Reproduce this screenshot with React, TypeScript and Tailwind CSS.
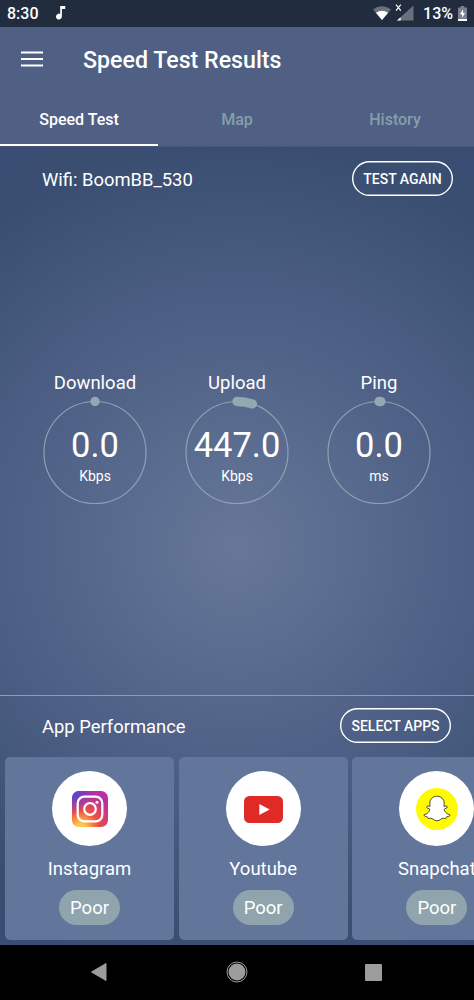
import { FaSnapchatGhost } from "react-icons/fa";

const tabs = ["Speed Test", "Map", "History"];

const gauges = [
    { label: "Download", value: "0.0", unit: "Kbps", sweep: 0 },
    { label: "Upload", value: "447.0", unit: "Kbps", sweep: 17.5 },
    { label: "Ping", value: "0.0", unit: "ms", sweep: 2 },
];

const InstagramIcon = () => (
    <svg width="36" height="36" viewBox="0 0 36 36">
        <defs>
            <radialGradient id="igWarm" gradientUnits="userSpaceOnUse" cx="9" cy="37" r="35">
                <stop offset="0" stopColor="#ffd45c" />
                <stop offset="0.15" stopColor="#fdbf4c" />
                <stop offset="0.5" stopColor="#f0503f" />
                <stop offset="1" stopColor="#b92fa5" />
            </radialGradient>
            <radialGradient id="igCool" gradientUnits="userSpaceOnUse" cx="0" cy="0" r="24">
                <stop offset="0" stopColor="#3b58d6" />
                <stop offset="0.3" stopColor="#5546cc" stopOpacity="0.85" />
                <stop offset="1" stopColor="#7638c8" stopOpacity="0" />
            </radialGradient>
        </defs>
        <rect width="36" height="36" rx="7" fill="url(#igWarm)" />
        <rect width="36" height="36" rx="7" fill="url(#igCool)" />
        <rect x="5.7" y="5.7" width="24.6" height="24.6" rx="6.5" fill="none" stroke="#fff" strokeWidth="2.2" />
        <circle cx="18" cy="18" r="5.8" fill="none" stroke="#fff" strokeWidth="2.2" />
        <circle cx="25" cy="11.2" r="1.5" fill="#fff" />
    </svg>
);

const YoutubeIcon = () => (
    <svg className="mt-[2px] ml-px" width="39" height="28" viewBox="0 0 39 28">
        <rect width="39" height="27" rx="5.5" fill="#e02a26" />
        <path d="M15.3 8 25.7 13.4 15.3 19Z" fill="#fff" />
    </svg>
);

const SnapchatIcon = () => (
    <div className="flex size-[42px] items-center justify-center rounded-full bg-[#fffa00]">
        <FaSnapchatGhost className="h-[27px] w-[26px] overflow-visible fill-white stroke-black [stroke-width:14px]" />
    </div>
);

const apps = [
    { name: "Instagram", score: "Poor", Icon: InstagramIcon },
    { name: "Youtube", score: "Poor", Icon: YoutubeIcon },
    { name: "Snapchat", score: "Poor", Icon: SnapchatIcon },
];

const StatusBar = () => (
    <div className="flex h-[27px] shrink-0 items-center bg-[#212d3f] pl-[7px] pr-[7px] text-[16px] font-medium">
        <span className="pt-px">8:30</span>
        <svg className="mb-px ml-[17px]" width="10" height="14" viewBox="0 0 10 14" fill="#fff">
            <path d="M4.2 0H9.2V3H5.9V10.6A2.95 2.95 0 1 1 4.2 7.9Z" />
        </svg>
        <svg className="mb-px ml-auto" width="18" height="14" viewBox="0 0 18 14">
            <path d="M0 3.4Q9-3 18 3.4L9 14Z" fill="#69717e" />
            <path d="M2.9 6.8Q9 2.6 15.1 6.8L9 14Z" fill="#fff" />
        </svg>
        <svg className="mb-px ml-1" width="20" height="18" viewBox="0 0 20 18">
            <path d="M18.5 1.5V16.5H2Z" fill="#69717e" />
            <path d="M5.6 13.2V16.5H2Z" fill="#fff" />
            <path d="M1 .7 5.8 6.7M5.8 .7 1 6.7" stroke="#fff" strokeWidth="1.2" />
        </svg>
        <span className="ml-[8px] pt-px">13%</span>
        <svg className="mb-px ml-[5px]" width="9" height="15" viewBox="0 0 9 15">
            <path d="M2.7 0H6.3V1.5H9V15H0V1.5H2.7Z" fill="#7a818c" />
            <path d="M0 13H9V15H0Z M5.1 3.3 1.9 8.2H4V11.7L7.1 6.9H5.1Z" fill="#fff" />
        </svg>
    </div>
);

const Header = () => (
    <header className="h-[120px] shrink-0 border-b border-[#465779] bg-[#4f6084]">
        <div className="flex h-[66px] items-center pl-[21px]">
            <svg className="mb-[2px]" width="22" height="16" viewBox="0 0 22 16" fill="#fff">
                <path d="M0 .5H22V2.5H0Z M0 7H22V9H0Z M0 13.5H22V15.5H0Z" />
            </svg>
            <h1 className="ml-10 text-[23.2px] font-medium">Speed Test Results</h1>
        </div>
        <nav className="grid h-[53px] grid-cols-3 text-[16px] font-medium">
            {tabs.map((tab, i) => (
                <button
                    key={tab}
                    className={
                        i === 0
                            ? "border-b-2 border-white pt-[2px]"
                            : "border-b-2 border-transparent pt-[2px] text-[#869ea9]"
                    }
                >
                    {tab}
                </button>
            ))}
        </nav>
    </header>
);

const Gauge = ({ label, value, unit, sweep }: (typeof gauges)[number]) => {
    const angle = (sweep * Math.PI) / 180;
    const endX = 55 + 51 * Math.sin(angle);
    const endY = 55 - 51 * Math.cos(angle);

    return (
        <div className="flex flex-col items-center">
            <span className="text-[18.5px] leading-6">{label}</span>
            <div className="relative mt-[2px] flex size-[110px] flex-col items-center pt-[24px]">
                <svg className="absolute inset-0 overflow-visible" width="110" height="110" viewBox="0 0 110 110" fill="none">
                    <circle cx="55" cy="55.5" r="51" stroke="#8da2b1" strokeWidth="1.2" />
                    <path
                        d={`M55 4.5A51 51 0 0 1 ${endX + 0.01} ${endY + 0.5}`}
                        stroke="#93a8b1"
                        strokeWidth="9.4"
                        strokeLinecap="round"
                    />
                </svg>
                <span className="text-[34.5px] leading-[48px]">{value}</span>
                <span className="mt-[-3px] text-[14px] leading-5">{unit}</span>
            </div>
        </div>
    );
};

const AppCard = ({ name, score, Icon }: (typeof apps)[number]) => (
    <div className="flex w-[169px] shrink-0 flex-col items-center rounded-[5px] bg-[#62759b] pt-[14px]">
        <div className="flex size-[75px] items-center justify-center rounded-full bg-white">
            <Icon />
        </div>
        <span className="mt-[11px] text-[18.5px] leading-6">{name}</span>
        <span className="mt-[9px] flex h-[35px] w-[61px] items-center justify-center rounded-full bg-[#8fa4ac] pt-[3px] text-[18.5px]">
            {score}
        </span>
    </div>
);

const NavBar = () => (
    <div className="grid h-[55px] shrink-0 grid-cols-3 items-center bg-black px-[30px] pb-px">
        <svg className="ml-[60px]" width="18" height="20" viewBox="0 0 18 20">
            <path d="M16 1.5V18.5L1.5 10Z" fill="#9c9c9c" stroke="#9c9c9c" strokeLinejoin="round" />
        </svg>
        <svg className="mx-auto" width="22" height="22" viewBox="0 0 22 22">
            <circle cx="11" cy="11" r="10" fill="none" stroke="#9c9c9c" />
            <circle cx="11" cy="11" r="8.5" fill="#9c9c9c" />
        </svg>
        <div className="ml-[59px] size-[17px] rounded-[1px] bg-[#9c9c9c]" />
    </div>
);

const App = () => {
    return (
        <div className="flex h-[1000px] w-[474px] flex-col overflow-hidden font-['Roboto',sans-serif] text-white">
            <StatusBar />
            <Header />
            <main className="flex min-h-0 flex-1 flex-col bg-[radial-gradient(circle_at_237px_400px,#677798_0px,#5c6e91_90px,#506187_210px,#44587c_310px,#3a4e72_400px,#394c71_460px)]">
                <div className="flex items-center justify-between pt-[14px] pr-[21px] pl-[42px]">
                    <span className="pt-[3px] text-[18.4px]">Wifi: BoomBB_530</span>
                    <button className="h-[35px] w-[101px] rounded-full pt-px text-[14px] font-medium shadow-[inset_0_0_0_1.4px_#fff]">
                        TEST AGAIN
                    </button>
                </div>
                <div className="grid flex-1 grid-cols-3 px-6 pt-[175px]">
                    {gauges.map((gauge) => (
                        <Gauge key={gauge.label} {...gauge} />
                    ))}
                </div>
                <section className="h-[250px] shrink-0 border-t border-[#8ba0ad]">
                    <div className="flex items-center justify-between pt-3 pr-[23px] pl-[42px]">
                        <span className="pt-[3px] text-[18.4px]">App Performance</span>
                        <button className="h-[35px] w-[111px] rounded-full pt-px text-[14px] font-medium shadow-[inset_0_0_0_1.4px_#fff]">
                            SELECT APPS
                        </button>
                    </div>
                    <div className="mt-[14px] flex h-[183px] gap-[4.7px] overflow-hidden pl-[5px]">
                        {apps.map((app) => (
                            <AppCard key={app.name} {...app} />
                        ))}
                    </div>
                </section>
            </main>
            <NavBar />
        </div>
    );
};

export default App;
